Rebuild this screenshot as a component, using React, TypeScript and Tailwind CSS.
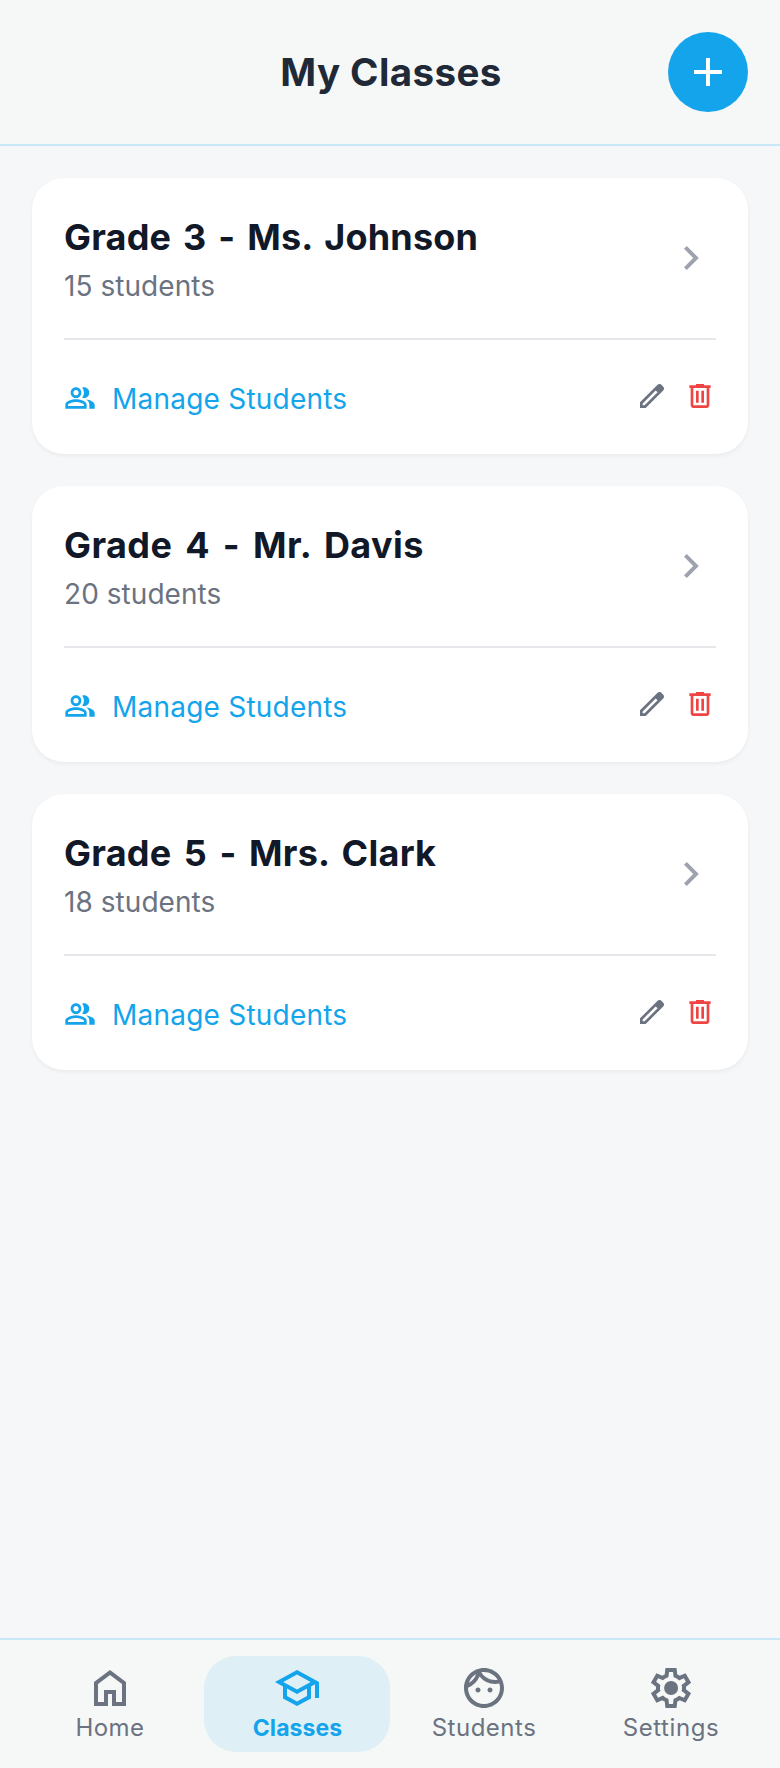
type IconProps = { d: string; className?: string };

function Icon({ d, className }: IconProps) {
  return (
    <svg viewBox="0 0 24 24" fill="currentColor" fillRule="evenodd" className={className} aria-hidden="true">
      <path d={d} />
    </svg>
  );
}

const icons = {
  add: "M11 19v-6H5v-2h6V5h2v6h6v2h-6v6Z",
  chevron: "m9.4 18-1.4-1.4 4.6-4.6L8 7.4 9.4 6l6 6Z",
  edit: "M5 19h1.425L16.2 9.225 14.775 7.8 5 17.575V19ZM3 21v-4.25L16.2 3.575c.2-.183.42-.325.663-.425.241-.1.495-.15.762-.15s.525.05.775.15c.25.1.467.25.65.45L20.425 5c.2.183.346.4.437.65.092.25.138.5.138.75 0 .267-.046.52-.138.763-.091.241-.237.462-.437.662L7.25 21H3Z",
  trash:
    "M7 21q-.825 0-1.412-.587Q5 19.825 5 19V6H4V4h5V3h6v1h5v2h-1v13q0 .825-.587 1.413Q17.825 21 17 21ZM17 6H7v13h10ZM9 17h2V8H9Zm4 0h2V8h-2Z",
  group:
    "M16.67 13.13C18.04 14.06 19 15.32 19 17v3h4v-3c0-2.18-3.57-3.47-6.33-3.87zM15 12c2.21 0 4-1.79 4-4s-1.79-4-4-4c-.47 0-.91.1-1.33.24a5.98 5.98 0 0 1 0 7.52c.42.14.86.24 1.33.24zM9 12c2.21 0 4-1.79 4-4s-1.79-4-4-4-4 1.79-4 4 1.79 4 4 4zm0-6c1.1 0 2 .9 2 2s-.9 2-2 2-2-.9-2-2 .9-2 2-2zM9 13c-2.67 0-8 1.34-8 4v3h16v-3c0-2.66-5.33-4-8-4zm6 5H3v-.99C3.2 16.29 6.3 15 9 15s5.8 1.29 6 2v1z",
  home: "M6 19h3v-6h6v6h3v-9l-6-4.5L6 10Zm-2 2V9l8-6 8 6v12h-7v-6h-2v6Z",
  school:
    "m12 21-7-3.8v-6L1 9l11-6 11 6v8h-2v-6.9l-2 1.1v6Zm0-8.3L18.85 9 12 5.3 5.15 9Zm0 6.025 5-2.7V12.25L12 15l-5-2.75v3.775Z",
  face: "M10.25 13c0 .69-.56 1.25-1.25 1.25S7.75 13.69 7.75 13s.56-1.25 1.25-1.25 1.25.56 1.25 1.25zM15 11.75c-.69 0-1.25.56-1.25 1.25s.56 1.25 1.25 1.25 1.25-.56 1.25-1.25-.56-1.25-1.25-1.25zm7 .25c0 5.52-4.48 10-10 10S2 17.52 2 12 6.48 2 12 2s10 4.48 10 10zM10.66 4.12C12.06 6.44 14.6 8 17.5 8c.46 0 .91-.05 1.34-.12C17.44 5.56 14.9 4 12 4c-.46 0-.91.05-1.34.12zM4.42 9.47a8.046 8.046 0 0 0 3.66-4.44 8.046 8.046 0 0 0-3.66 4.44zM20 12c0-.78-.12-1.53-.33-2.24-.7.15-1.42.24-2.17.24a10 10 0 0 1-7.76-3.69A10.016 10.016 0 0 1 4 11.86c.01.04 0 .09 0 .14 0 4.42 3.58 8 8 8s8-3.58 8-8z",
  settings:
    "m9.25 22-.4-3.2q-.325-.125-.612-.3-.288-.175-.563-.375L4.7 19.375l-2.75-4.75 2.575-1.95Q4.5 12.5 4.5 12.337v-.675q0-.162.025-.337L1.95 9.375l2.75-4.75 2.975 1.25q.275-.2.575-.375.3-.175.6-.3l.4-3.2h5.5l.4 3.2q.325.125.613.3.287.175.562.375l2.975-1.25 2.75 4.75-2.575 1.95q.025.175.025.337v.675q0 .163-.05.338l2.575 1.95-2.75 4.75-2.95-1.25q-.275.2-.575.375-.3.175-.6.3l-.4 3.2ZM11 20h1.975l.35-2.65q.775-.2 1.438-.588.662-.387 1.212-.937l2.475 1.025.975-1.7-2.15-1.625q.125-.35.175-.738.05-.387.05-.787t-.05-.788q-.05-.387-.175-.737l2.15-1.625-.975-1.7-2.475 1.05q-.55-.575-1.212-.963-.663-.387-1.438-.587L13 4h-1.975l-.35 2.65q-.775.2-1.437.587-.663.388-1.213.938L5.55 7.15l-.975 1.7 2.15 1.6q-.125.375-.175.75-.05.375-.05.8 0 .4.05.775.05.375.175.75l-2.15 1.625.975 1.7 2.475-1.05q.55.575 1.213.962.662.388 1.437.588ZM12.05 15.5q1.45 0 2.475-1.025Q15.55 13.45 15.55 12q0-1.45-1.025-2.475Q13.5 8.5 12.05 8.5q-1.475 0-2.488 1.025Q8.55 10.55 8.55 12q0 1.45 1.012 2.475Q10.575 15.5 12.05 15.5Z",
};

const classes = [
  { name: "Grade 3 - Ms. Johnson", students: 15, spacing: "tracking-[0.2px] [word-spacing:3.1px]" },
  { name: "Grade 4 - Mr. Davis", students: 20, spacing: "tracking-[0.4px] [word-spacing:4px]" },
  { name: "Grade 5 - Mrs. Clark", students: 18, spacing: "tracking-[0.25px] [word-spacing:3.6px]" },
];

const tabs = [
  { label: "Home", icon: icons.home, active: false, spacing: "text-[24px] tracking-[0.4px]" },
  { label: "Classes", icon: icons.school, active: true, spacing: "text-[23px] tracking-[0.07px]" },
  { label: "Students", icon: icons.face, active: false, spacing: "text-[24px] tracking-[0.5px]" },
  { label: "Settings", icon: icons.settings, active: false, spacing: "text-[24px] tracking-[0.6px]" },
];

function ClassCard({ name, students, spacing }: (typeof classes)[number]) {
  return (
    <article className="h-[276px] rounded-[32px] bg-white px-8 pt-8 shadow-[0_2px_4px_rgba(0,0,0,0.05)]">
      <div className="flex items-center justify-between border-b-2 border-[#e5e7eb] pb-8">
        <div>
          <h2 className={`h-14 text-[36px] leading-[54px] font-bold whitespace-nowrap text-[#111827] ${spacing}`}>{name}</h2>
          <p className="h-10 text-[28px] leading-[41px] tracking-[0.05px] text-[#6b7280]">{students} students</p>
        </div>
        <Icon d={icons.chevron} className="size-12 text-[#9ca3af]" />
      </div>
      <div className="flex items-start justify-between pt-8">
        <button className="mt-1.5 flex h-10 items-center gap-4 text-[28px] tracking-[0.22px] text-[#13a4ec]">
          <Icon d={icons.group} className="size-8" />
          <span className="pt-0.5 leading-10">Manage Students</span>
        </button>
        <div className="flex gap-4 pt-2">
          <button aria-label="Edit" className="text-[#6b7280]">
            <Icon d={icons.edit} className="size-8" />
          </button>
          <button aria-label="Delete" className="text-[#ef4444]">
            <Icon d={icons.trash} className="size-8" />
          </button>
        </div>
      </div>
    </article>
  );
}

export default function App() {
  return (
    <div className="flex h-[1768px] w-[780px] flex-col bg-[#f6f7f9] font-['Inter',sans-serif]">
      <header className="flex h-[146px] shrink-0 items-center justify-between border-b-2 border-[#c9e7f5] bg-[#f6f8f7] px-8">
        <div className="w-20" />
        <h1 className="pl-0.5 text-[38.5px] leading-[56px] font-bold tracking-[0.4px] text-[#1f2937]">My Classes</h1>
        <button aria-label="Add class" className="flex size-20 items-center justify-center rounded-full bg-[#13a4ec] text-white">
          <Icon d={icons.add} className="size-12" />
        </button>
      </header>
      <main className="flex flex-1 flex-col gap-8 p-8">
        {classes.map((c) => (
          <ClassCard key={c.name} {...c} />
        ))}
      </main>
      <nav className="grid h-[130px] shrink-0 grid-cols-4 border-t-2 border-[#c9e7f5] bg-[#f6f8f7] p-4">
        {tabs.map((t) => (
          <a
            key={t.label}
            className={`flex h-24 flex-col items-center rounded-[32px] py-2 ${
              t.active ? "ml-px bg-[#dfeff6] font-bold text-[#13a4ec]" : "text-[#6b7280]"
            }`}
          >
            <Icon d={t.icon} className="size-12" />
            <span className={`pl-px leading-8 ${t.spacing}`}>{t.label}</span>
          </a>
        ))}
      </nav>
    </div>
  );
}
